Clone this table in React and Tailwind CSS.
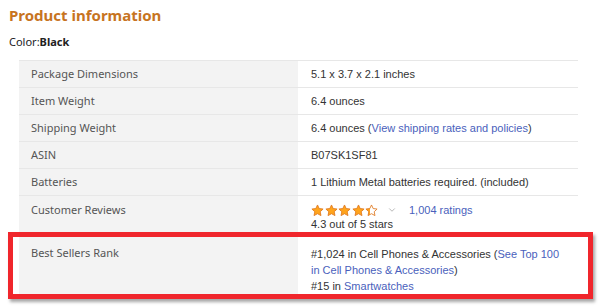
import { ChevronDown } from 'lucide-react';

const rows = [
  { label: 'Package Dimensions', value: <>5.1 x 3.7 x 2.1 inches</> },
  { label: 'Item Weight', value: <>6.4 ounces</> },
  {
    label: 'Shipping Weight',
    value: (
      <>
        6.4 ounces (<a className="text-[#4a5fbc]">View shipping rates and policies</a>)
      </>
    ),
  },
  { label: 'ASIN', value: <>B07SK1SF81</> },
  { label: 'Batteries', value: <>1 Lithium Metal batteries required. (included)</> },
];

function Star({ fill = 1, id }) {
  return (
    <svg width="13" height="13" viewBox="0 0 24 24">
      <defs>
        <linearGradient id={id}>
          <stop offset={fill} stopColor="#ffa41c" />
          <stop offset={fill} stopColor="#fff" />
        </linearGradient>
      </defs>
      <path
        d="M12 1.8l3.1 6.6 7.2.9-5.3 5 1.4 7.1L12 17.9l-6.4 3.5 1.4-7.1-5.3-5 7.2-.9z"
        fill={`url(#${id})`}
        stroke="#de7921"
        strokeWidth="1.6"
        strokeLinejoin="round"
      />
    </svg>
  );
}

export default function App() {
  return (
    <div className="relative w-[600px] h-[308px] bg-white overflow-hidden">
      <div className="pl-[9px] pt-[5px]">
        <h2 className="text-[15px] leading-[20px] font-bold text-[#c7741f] font-['Noto_Sans',sans-serif]">
          Product information
        </h2>
        <p className="mt-[10px] text-[11px] leading-[14px] text-[#222] font-['Noto_Sans',sans-serif]">
          Color:<span className="font-bold">Black</span>
        </p>
      </div>

      <table className="ml-[19px] mt-[11px] w-[559px] border-collapse text-[11px]">
        <tbody>
          {rows.map((r) => (
            <tr key={r.label} className="border-t border-[#e7e7e7] h-[27px]">
              <td className="w-[279px] bg-[#f3f3f3] pl-[12px] text-[#555] font-['Noto_Sans',sans-serif] align-middle">
                {r.label}
              </td>
              <td className="pl-[13px] pr-[16px] text-[#333] font-['Liberation_Sans',Arial,sans-serif] align-middle">
                {r.value}
              </td>
            </tr>
          ))}
          <tr className="border-t border-[#e7e7e7] h-[37px]">
            <td className="bg-[#f3f3f3] pl-[12px] pt-[6px] text-[#555] font-['Noto_Sans',sans-serif] align-top">
              Customer Reviews
            </td>
            <td className="pl-[13px] pr-[16px] pt-[7px] text-[#333] font-['Liberation_Sans',Arial,sans-serif] align-top">
              <div className="flex items-center h-[14px]">
                <div className="flex gap-[0.5px]">
                  <Star id="s1" />
                  <Star id="s2" />
                  <Star id="s3" />
                  <Star id="s4" />
                  <Star id="s5" fill={0.35} />
                </div>
                <ChevronDown size={10} className="ml-[9px] text-[#aaa]" strokeWidth={2} />
                <a className="ml-[12px] text-[#4a5fbc]">1,004 ratings</a>
              </div>
              <div className="leading-[14px]">4.3 out of 5 stars</div>
            </td>
          </tr>
          <tr className="border-t border-[#e7e7e7] h-[65px]">
            <td className="bg-[#f3f3f3] pl-[12px] pt-[12px] text-[#555] font-['Noto_Sans',sans-serif] align-top">
              Best Sellers Rank
            </td>
            <td className="pl-[13px] pr-[16px] pt-[13px] text-[#333] leading-[16px] font-['Liberation_Sans',Arial,sans-serif] align-top">
              #1,024 in Cell Phones &amp; Accessories (<a className="text-[#4a5fbc]">See Top 100 in Cell Phones &amp; Accessories</a>)
              <br />
              #15 in <a className="text-[#4a5fbc]">Smartwatches</a>
            </td>
          </tr>
        </tbody>
      </table>

      <div className="absolute left-[8px] top-[232px] w-[585px] h-[67px] border-[5px] border-[#f0262c] shadow-[2px_3px_3px_rgba(0,0,0,0.35)]" />
    </div>
  );
}
